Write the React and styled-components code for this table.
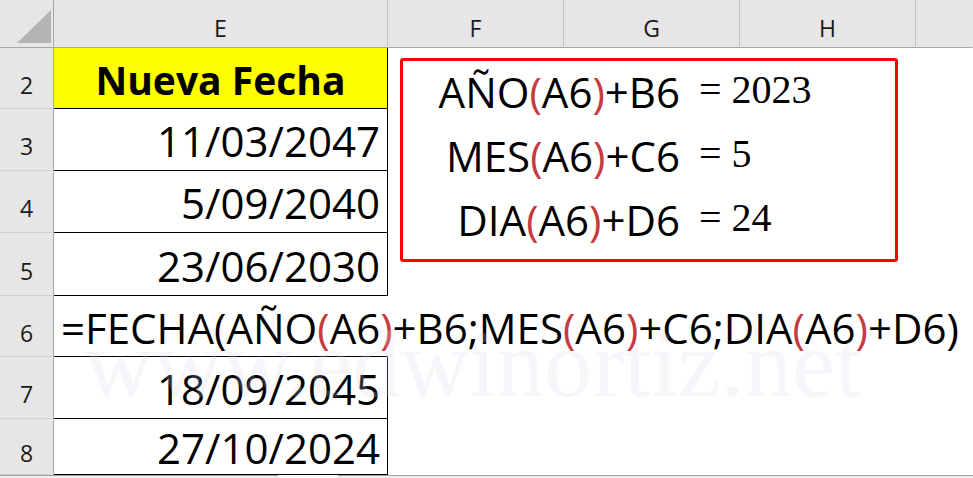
import React from 'react';
import styled, { createGlobalStyle } from 'styled-components';

const GlobalStyle = createGlobalStyle`
  *, *::before, *::after { box-sizing: border-box; }
  html, body { margin: 0; padding: 0; background: #fff; overflow: hidden; }
  body { font-family: "Open Sans", "Liberation Sans", sans-serif; color: #000; }
`;

const RED = '#c63a40';

const rows = [
  { n: 2, h: 61, text: 'Nueva Fecha', title: true },
  { n: 3, h: 62, text: '11/03/2047' },
  { n: 4, h: 62, text: '5/09/2040' },
  { n: 5, h: 63, text: '23/06/2030' },
  { n: 6, h: 61, formula: true },
  { n: 7, h: 62, text: '18/09/2045' },
  { n: 8, h: 56, text: '27/10/2024' },
];

const checks = [
  { fn: 'AÑO', add: 'B6', value: '2023' },
  { fn: 'MES', add: 'C6', value: '5' },
  { fn: 'DIA', add: 'D6', value: '24' },
];

const Page = styled.div`
  position: relative;
  width: 973px;
  height: 478px;
  overflow: hidden;
`;

const Sheet = styled.div`
  display: grid;
  grid-template-columns: 54px 334px 176px 176px 176px 1fr;
  grid-template-rows: 48px ${rows.map(r => r.h + 'px').join(' ')};
`;

const Corner = styled.div`
  position: relative;
  background: #e6e6e6;
  border-right: 1px solid #a8a8a8;
  border-bottom: 1px solid #a8a8a8;
  &::after {
    content: '';
    position: absolute;
    left: 17px;
    top: 10px;
    width: 34px;
    height: 33px;
    background: #b4b4b4;
    clip-path: polygon(100% 0, 100% 100%, 0 100%);
  }
`;

const ColHead = styled.div`
  display: flex;
  align-items: center;
  justify-content: center;
  padding-top: 8px;
  background: #e6e6e6;
  border-right: 1px solid ${p => (p.$last ? 'transparent' : '#c4c4c4')};
  border-bottom: 1px solid #a8a8a8;
  font-size: 23px;
  color: #1a1a1a;
`;

const RowHead = styled.div`
  display: flex;
  align-items: center;
  justify-content: center;
  padding-top: 13px;
  background: #e6e6e6;
  border-right: 1px solid #a8a8a8;
  border-bottom: 1px solid #d2d2d2;
  font-size: 23px;
  color: #1a1a1a;
`;

const Cell = styled.div`
  display: flex;
  align-items: center;
  justify-content: ${p => (p.$title ? 'center' : p.$formula ? 'flex-start' : 'flex-end')};
  padding: 2px 7px 0 7px;
  background: ${p => (p.$title ? '#ffff00' : 'transparent')};
  border-right: 1px solid ${p => (p.$formula ? 'transparent' : '#000')};
  border-bottom: 1px solid #000;
  font-size: ${p => (p.$title ? '39px' : '42px')};
  font-weight: ${p => (p.$title ? 700 : 400)};
  white-space: nowrap;
  overflow: visible;
  position: relative;
  z-index: 1;
`;

const Blank = styled.div`
  grid-column: 3 / -1;
`;

const Paren = styled.span`
  color: ${RED};
`;

const CheckBox = styled.div`
  position: absolute;
  left: 400px;
  top: 58px;
  width: 498px;
  height: 204px;
  border: 3px solid #ff0000;
  border-radius: 3px;
  padding-top: 8px;
  display: grid;
  grid-template-columns: 277px auto;
  grid-auto-rows: 46px;
  column-gap: 19px;
  row-gap: 18px;
  align-items: end;
  z-index: 2;
`;

const Expr = styled.div`
  text-align: right;
  font-size: 42px;
  line-height: 46px;
  white-space: nowrap;
`;

const Result = styled.div`
  font-family: "Liberation Serif", "Times New Roman", serif;
  font-size: 40px;
  line-height: 40px;
  padding-bottom: 5px;
  white-space: pre;
`;

const Watermark = styled.div`
  position: absolute;
  left: 84px;
  top: 316px;
  font-family: "Liberation Serif", "Times New Roman", serif;
  font-size: 96px;
  line-height: 96px;
  color: rgba(215, 215, 232, 0.22);
  white-space: nowrap;
  pointer-events: none;
  z-index: 3;
`;

const TabStrip = styled.div`
  display: flex;
  height: 3px;
`;

const TabEdge = styled.div`
  flex: ${p => (p.$grow ? 1 : 'none')};
  width: ${p => (p.$w ? p.$w + 'px' : 'auto')};
  border-top: 1px solid ${p => (p.$gap ? 'transparent' : '#a0a0a0')};
  background: ${p => (p.$gap ? '#fff' : '#efefef')};
`;

function FormulaText() {
  return (
    <>
      =FECHA(AÑO<Paren>(</Paren>A6<Paren>)</Paren>+B6;MES<Paren>(</Paren>A6<Paren>)</Paren>+C6;DIA
      <Paren>(</Paren>A6<Paren>)</Paren>+D6)
    </>
  );
}

export default function App() {
  return (
    <Page>
      <GlobalStyle />
      <Sheet>
        <Corner />
        {['E', 'F', 'G', 'H', ''].map((c, i) => (
          <ColHead key={i} $last={i === 4}>{c}</ColHead>
        ))}
        {rows.map(r => (
          <React.Fragment key={r.n}>
            <RowHead>{r.n}</RowHead>
            <Cell $title={r.title} $formula={r.formula}>
              {r.formula ? <FormulaText /> : r.text}
            </Cell>
            <Blank />
          </React.Fragment>
        ))}
      </Sheet>
      <TabStrip>
        <TabEdge $w={278} />
        <TabEdge $w={60} $gap />
        <TabEdge $grow />
      </TabStrip>

      <CheckBox>
        {checks.map(c => (
          <React.Fragment key={c.fn}>
            <Expr>
              {c.fn}<Paren>(</Paren>A6<Paren>)</Paren>+{c.add}
            </Expr>
            <Result>= {c.value}</Result>
          </React.Fragment>
        ))}
      </CheckBox>

      <Watermark>www.edwinortiz.net</Watermark>
    </Page>
  );
}
